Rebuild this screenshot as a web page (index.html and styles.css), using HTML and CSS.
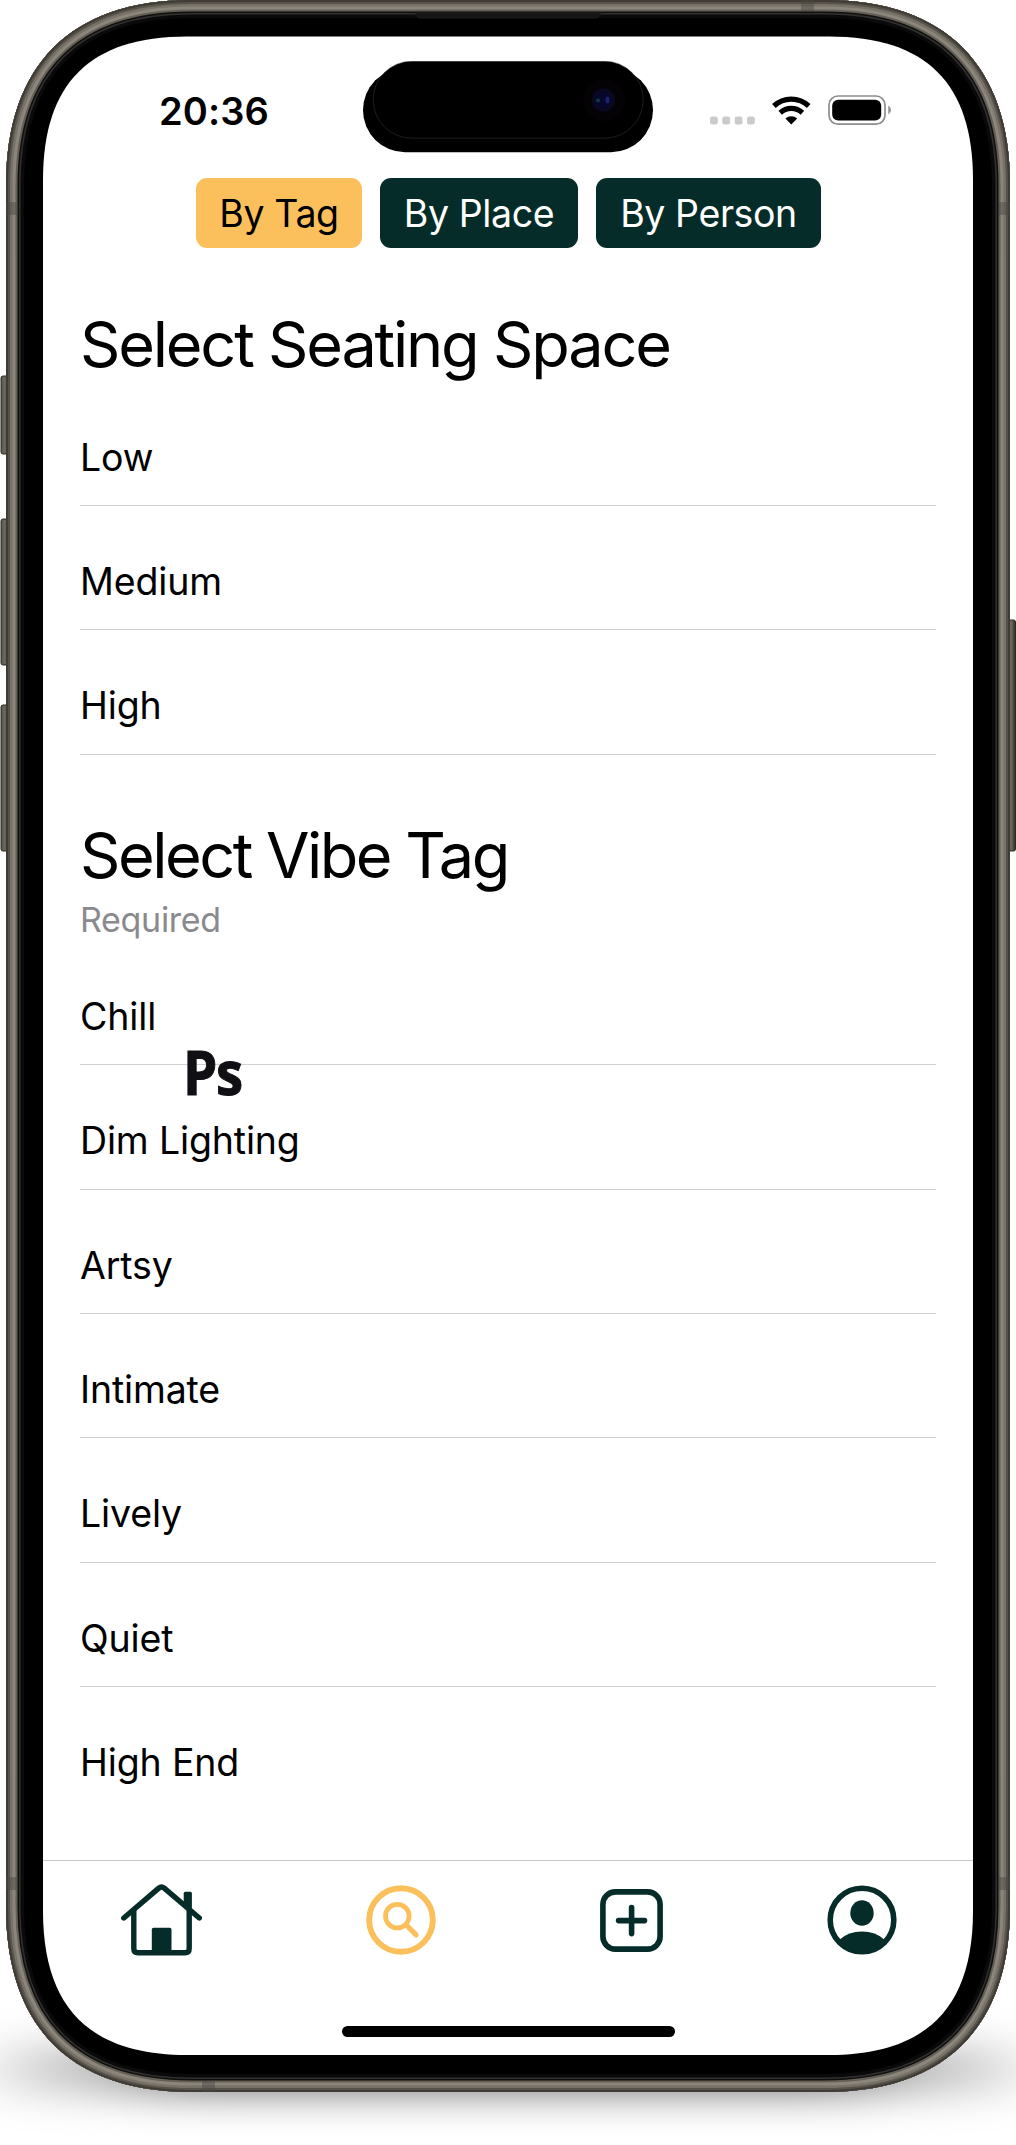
FILE: index.html
```html
<!DOCTYPE html>
<html lang="en">
<head>
<meta charset="utf-8">
<title>Search by tag</title>
<link rel="stylesheet" href="styles.css">
</head>
<body>
<div class="stage">
  <svg class="device" width="1016" height="2145" viewBox="0 0 1016 2145" aria-hidden="true">
    <defs>
      <filter id="soft" x="-20%" y="-200%" width="140%" height="500%"><feGaussianBlur stdDeviation="42 19"/></filter>
      <path id="body" d="M6 185C6 65 71 0 191 0H825C945 0 1010 65 1010 185V1907C1010 2027 945 2092 825 2092H191C71 2092 6 2027 6 1907Z"/>
      <linearGradient id="key" x1="0" x2="1" y1="0" y2="0"><stop offset="0" stop-color="#57524a"/><stop offset=".5" stop-color="#6e6a61"/><stop offset="1" stop-color="#2f2b25"/></linearGradient>
      <clipPath id="bodyClip"><use href="#body"/></clipPath>
    </defs>
    <g fill="#000" filter="url(#soft)">
      <rect x="10" y="2045" width="996" height="48" rx="24" opacity=".24"/>
      <rect x="130" y="2040" width="756" height="54" rx="25" opacity=".38"/>
    </g>
    <g fill="url(#key)" stroke="#2c2924" stroke-width="1">
      <rect x="1" y="376" width="8" height="78" rx="2"/>
      <rect x="1" y="519" width="8" height="146" rx="2"/>
      <rect x="1" y="705" width="8" height="146" rx="2"/>
      <rect x="1007" y="620" width="8.5" height="231" rx="2"/>
    </g>
    <g clip-path="url(#bodyClip)" fill="none">
      <use href="#body" fill="#000"/>
      <use href="#body" stroke="#0a0a0a" stroke-width="36"/>
      <use href="#body" stroke="#303030" stroke-width="29"/>
      <use href="#body" stroke="#100f0b" stroke-width="26"/>
      <use href="#body" stroke="#645f56" stroke-width="23"/>
      <use href="#body" stroke="#8b857b" stroke-width="19"/>
      <use href="#body" stroke="#777168" stroke-width="13"/>
      <use href="#body" stroke="#57524a" stroke-width="8"/>
      <use href="#body" stroke="#403c35" stroke-width="4"/>
      <g fill="#4a4742" opacity=".45">
        <rect x="6" y="202" width="12" height="13"/><rect x="999" y="202" width="12" height="13"/>
        <rect x="6" y="1877" width="12" height="13"/><rect x="999" y="1877" width="12" height="13"/>
        <rect x="801" y="0" width="13" height="11"/><rect x="202" y="2081" width="13" height="11"/>
      </g>
      <path d="M415 13H602L597 18H419Z" fill="#151515" stroke="#292929" stroke-width=".6"/>
    </g>
    <path d="M43 180C43 83 90 36.5 187 36.5H829C926 36.5 973 83 973 180V1911C973 2008 926 2055 829 2055H187C90 2055 43 2008 43 1911Z" fill="#fff"/>
  </svg>

  <main class="screen">
    <header class="status">
      <span class="clock">20:36</span>
      <svg class="signals" width="182" height="32" viewBox="709 94 182 32" aria-label="Signal, Wi-Fi and battery">
        <g fill="#cbcbcb"><rect x="710" y="116.6" width="7.8" height="7.8" rx="2.2"/><rect x="722.3" y="116.6" width="7.8" height="7.8" rx="2.2"/><rect x="734.7" y="116.6" width="7.8" height="7.8" rx="2.2"/><rect x="747" y="116.6" width="7.8" height="7.8" rx="2.2"/></g>
        <g fill="none" stroke="#000" stroke-width="5.3"><path d="M773.9 106A25.2 25.2 0 0 1 808.7 106"/><path d="M780.2 112.7A16.2 16.2 0 0 1 802.4 112.7"/></g>
        <path d="M791.3 124.6L785.4 118.6A8.5 8.5 0 0 1 797.2 118.6Z"/>
        <rect x="829" y="96" width="56" height="28.2" rx="9" fill="none" stroke="#8d8d8d" stroke-width="1.7"/>
        <rect x="832.2" y="99.8" width="49" height="20.8" rx="6"/>
        <path d="M888.3 105.6Q891 107.3 891 110Q891 112.7 888.3 114.4Z" fill="#8d8d8d"/>
      </svg>
      <svg class="island" width="290" height="92" viewBox="363 61 290 92" aria-hidden="true">
        <rect x="363" y="68" width="290" height="84.3" rx="42.1"/>
        <rect x="373.2" y="61.2" width="270" height="77" rx="38.5" stroke="#3b3b3b" stroke-width=".5"/>
        <circle cx="604" cy="100" r="21" fill="#050205"/>
        <circle cx="603.5" cy="100" r="11.5" fill="#080820"/><circle cx="603.5" cy="100" r="7.5" fill="#06062f"/>
        <circle cx="598" cy="100.5" r="2" fill="#123a48"/><ellipse cx="607.5" cy="100" rx="2" ry="3.5" fill="#20206c"/>
      </svg>
    </header>

    <nav class="filters">
      <button class="chip chip-on">By Tag</button>
      <button class="chip chip-place">By Place</button>
      <button class="chip chip-person">By Person</button>
    </nav>

    <section class="group">
      <h2 class="title">Select Seating Space</h2>
      <ul class="options">
        <li class="option">Low</li>
        <li class="option">Medium</li>
        <li class="option">High</li>
      </ul>
    </section>

    <section class="group group-vibe">
      <h2 class="title title-vibe">Select Vibe Tag</h2>
      <p class="hint">Required</p>
      <ul class="options">
        <li class="option">Chill</li>
        <li class="option">Dim Lighting<span class="badge">Ps</span></li>
        <li class="option">Artsy</li>
        <li class="option">Intimate</li>
        <li class="option">Lively</li>
        <li class="option">Quiet</li>
        <li class="option">High End</li>
      </ul>
    </section>

    <nav class="tabs">
      <svg width="81" height="72" viewBox="121 1884 81 72" aria-label="Home">
        <g fill="none" stroke="#052c28" stroke-width="5.4" stroke-linecap="round" stroke-linejoin="round">
          <path d="M123.8 1918L158.8 1888.1Q161.5 1885.9 164.2 1888.1L199.3 1918"/>
          <path d="M133.8 1911V1948.5Q133.8 1952.7 138 1952.7H185Q189.2 1952.7 189.2 1948.5V1911"/>
        </g>
        <path d="M183.7 1893.3Q183.7 1891.8 185.2 1891.8H190.3Q191.9 1891.8 191.9 1893.3V1913L183.7 1906Z" fill="#052c28"/>
        <path d="M151.8 1953V1929.5Q151.8 1927.8 153.5 1927.8H169.8Q171.5 1927.8 171.5 1929.5V1953Z" fill="#052c28"/>
      </svg>
      <svg width="70" height="70" viewBox="365.7 1885.5 70 70" aria-label="Search">
        <g fill="none" stroke="#fbc05c" stroke-linecap="round"><circle cx="400.7" cy="1920.5" r="31.8" stroke-width="5.9"/><circle cx="397" cy="1916.6" r="11.8" stroke-width="4.8"/><path d="M406 1925.5L415.8 1935.3" stroke-width="5.2"/></g>
      </svg>
      <svg width="63" height="63" viewBox="600.2 1889 63 63" aria-label="Add">
        <g fill="none" stroke="#052c28" stroke-width="5.6" stroke-linecap="round"><rect x="603.1" y="1891.9" width="57.2" height="57.2" rx="12.5"/><path d="M618.8 1920.6H644.7M631.8 1907.6V1933.6"/></g>
      </svg>
      <svg width="70" height="70" viewBox="827.5 1885.5 70 70" aria-label="Profile">
        <g fill="#052c28"><circle cx="862.5" cy="1920.5" r="31.8" fill="none" stroke="#052c28" stroke-width="5.6"/><ellipse cx="862.5" cy="1913.5" rx="11.7" ry="12.8"/><path d="M840.3 1940Q849 1932 862.5 1932T884.7 1940Q876.5 1952.5 862.5 1952.5T840.3 1940Z"/></g>
      </svg>
    </nav>
    <div class="home-bar"></div>
  </main>
</div>
</body>
</html>
```
FILE: styles.css
```css
* { box-sizing: border-box; }
body { margin: 0; background: #fff; font-family: Inter, "Liberation Sans", sans-serif; color: #000; }
.stage { position: relative; width: 1016px; height: 2145px; padding: 36px 43px 0; overflow: hidden; }
.device { position: absolute; inset: 0; }
.screen { position: relative; display: flex; flex-direction: column; height: 2019px; }

.status { position: relative; display: flex; justify-content: space-between; height: 142px; padding: 52px 82px 0 116px; }
.clock { font-size: 38px; line-height: 46px; font-weight: 600; letter-spacing: 0.1px; }
.signals { margin-top: 6px; }
.island { position: absolute; left: 320px; top: 25px; }

.filters { display: flex; justify-content: center; gap: 18px; height: 70px; padding-left: 1px; }
.chip { width: 166px; height: 70px; padding: 2px 0 0; border: 0; border-radius: 11px; background: #052c28; color: #fff; font: 400 37.5px/68px Inter, "Liberation Sans", sans-serif; letter-spacing: -0.4px; white-space: nowrap; }
.chip-on { background: #fbc05c; color: #000; }
.chip-place { width: 198px; }
.chip-person { width: 225px; }

.group { margin: 57.6px 37px 0; }
.group-vibe { margin-top: 62px; }
.title { margin: 0; font-size: 63px; line-height: 76px; font-weight: 400; letter-spacing: -2.2px; }
.title-vibe { letter-spacing: -2.5px; }
.hint { margin: 6px 0 0; font-size: 34px; line-height: 42px; color: #8a8a8e; letter-spacing: -0.3px; }
.options { margin: 0; padding: 0; list-style: none; }
.option { position: relative; height: 124.4px; padding-top: 53px; border-bottom: 1px solid #d0d0d1; font-size: 37.5px; line-height: 46px; letter-spacing: -0.15px; }
.group-vibe .option:last-child { border-bottom: 0; height: 118px; }
.badge { position: absolute; left: 103px; top: -25px; font: 700 60px/64px "Open Sans", sans-serif; letter-spacing: -1.5px; color: #101014; -webkit-text-stroke: 1px #101014; transform: scaleX(.91); transform-origin: left; }

.tabs { display: flex; justify-content: space-between; align-items: center; height: 120px; margin-top: auto; padding: 0 75.5px 0 78px; border-top: 1px solid #c8c8c8; }
.home-bar { width: 333px; height: 11.5px; margin: 46px auto 18px; border-radius: 6px; background: #000; }
```
